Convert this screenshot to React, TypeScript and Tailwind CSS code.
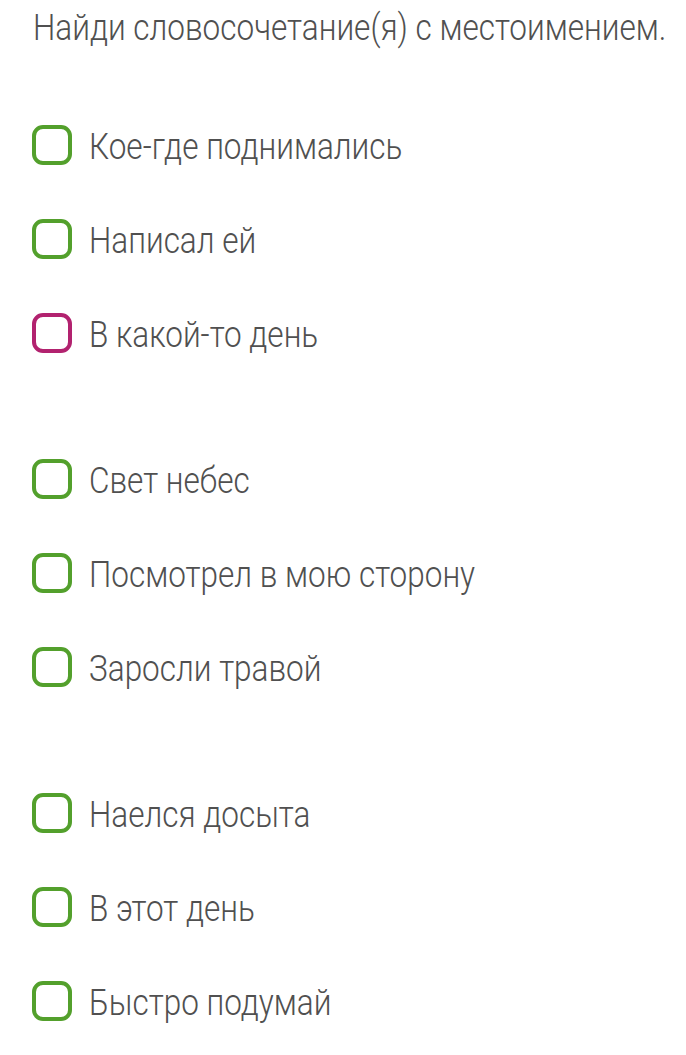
import React from "react";

const groups: { text: string; pink?: boolean }[][] = [
  [{ text: "Кое-где поднимались" }, { text: "Написал ей" }, { text: "В какой-то день", pink: true }],
  [{ text: "Свет небес" }, { text: "Посмотрел в мою сторону" }, { text: "Заросли травой" }],
  [{ text: "Наелся досыта" }, { text: "В этот день" }, { text: "Быстро подумай" }],
];

export default function App() {
  return (
    <div
      className="w-[686px] h-[1055px] bg-white text-[#505050] overflow-hidden"
      style={{ fontFamily: "Roboto, 'Noto Sans', sans-serif" }}
    >
      <div className="pl-[33px] h-[59px] pb-[4px] flex items-center">
        <span className="inline-block origin-left scale-x-[0.875] text-[36px] font-light whitespace-nowrap leading-none">
          Найди словосочетание(я) с местоимением.
        </span>
      </div>
      <div className="flex flex-col gap-[106px] pt-[66px]">
        {groups.map((g, gi) => (
          <div key={gi} className="flex flex-col gap-[54px]">
            {g.map((it, i) => (
              <div key={i} className="flex items-center h-[40px] pl-[32px]">
                <div
                  className={
                    "w-[40px] h-[40px] rounded-[11px] border-[4px] shrink-0 " +
                    (it.pink ? "border-[#b2226f]" : "border-[#53a02c]")
                  }
                />
                <span className="ml-[17px] mt-[3px] inline-block origin-left scale-x-[0.875] text-[36px] font-light whitespace-nowrap leading-none">
                  {it.text}
                </span>
              </div>
            ))}
          </div>
        ))}
      </div>
    </div>
  );
}
